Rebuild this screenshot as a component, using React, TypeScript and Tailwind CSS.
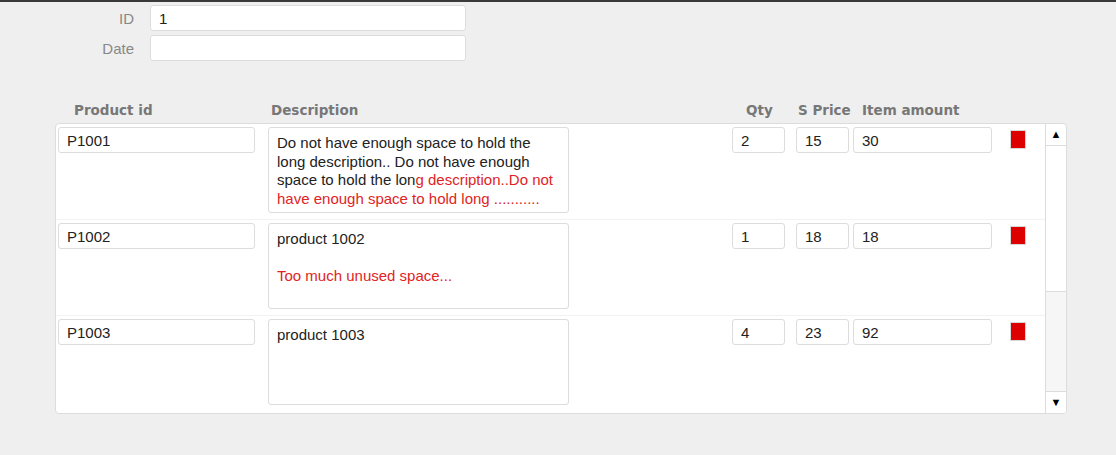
import React from "react";

const sans = { fontFamily: '"Liberation Sans", Arial, sans-serif' };

function Box({ w, children, h = "h-[26px]" }: { w: string; children?: React.ReactNode; h?: string }) {
  return (
    <div className={`${w} ${h} shrink-0 bg-white border border-[#dcdcdc] rounded-[3px] pl-[8px] pt-[3px] flex items-center text-[15px] text-[#222]`}>
      {children}
    </div>
  );
}

function Desc({ children }: { children: React.ReactNode }) {
  return (
    <div className="w-[301px] h-[86px] shrink-0 bg-white border border-[#dcdcdc] rounded-[3px] pl-[8px] pr-[6px] pt-[6px] text-[15px] leading-[18.7px] text-[#222]">
      {children}
    </div>
  );
}

function Row({ id, desc, qty, price, amount, last }: { id: string; desc: React.ReactNode; qty: string; price: string; amount: string; last?: boolean }) {
  return (
    <div className={`h-[96px] flex items-start pt-[3px] pl-[2px] ${last ? "" : "border-b border-[#f2f2f2]"}`}>
      <Box w="w-[197px]">{id}</Box>
      <div className="w-[13px] shrink-0" />
      <Desc>{desc}</Desc>
      <div className="w-[163px] shrink-0" />
      <Box w="w-[53px]">{qty}</Box>
      <div className="w-[11px] shrink-0" />
      <Box w="w-[53px]">{price}</Box>
      <div className="w-[4px] shrink-0" />
      <Box w="w-[139px]">{amount}</Box>
      <div className="w-[18px] shrink-0" />
      <div className="mt-[3px] w-[16px] h-[19px] border border-[#d8d8d8] bg-[#dd0000] shrink-0" />
    </div>
  );
}

export default function App() {
  const red = "text-[#e02424]";
  return (
    <div className="w-[1116px] h-[455px] bg-[#efefef] overflow-hidden" style={sans}>
      <div className="h-[2px] bg-[#3a3a3a]" />
      <div className="pt-[3px] flex flex-col gap-[4px]">
        <div className="flex items-center">
          <div className="w-[134px] pt-[2px] text-right text-[15px] text-[#888]">ID</div>
          <div className="w-[16px]" />
          <Box w="w-[316px]">1</Box>
        </div>
        <div className="flex items-center">
          <div className="w-[134px] pt-[2px] text-right text-[15px] text-[#888]">Date</div>
          <div className="w-[16px]" />
          <Box w="w-[316px]" />
        </div>
      </div>
      <div
        className="mt-[39px] h-[20px] flex items-center text-[13.5px] font-bold text-[#777]"
        style={{ fontFamily: '"DejaVu Sans", Verdana, sans-serif' }}
      >
        <div className="w-[74px] shrink-0" />
        <div className="w-[197px] shrink-0">Product id</div>
        <div className="w-[475px] shrink-0">Description</div>
        <div className="w-[52px] shrink-0">Qty</div>
        <div className="w-[64px] shrink-0">S Price</div>
        <div>Item amount</div>
      </div>
      <div className="ml-[55px] mt-[3px] w-[1012px] h-[291px] bg-white border border-[#dcdcdc] rounded-[4px] flex overflow-hidden">
        <div className="flex-1 flex flex-col">
          <Row
            id="P1001"
            desc={
              <>
                Do not have enough space to hold the long description.. Do not have enough space to hold the lon
                <span className={red}>g description..Do not have enough space to hold long ...........</span>
              </>
            }
            qty="2"
            price="15"
            amount="30"
          />
          <Row
            id="P1002"
            desc={
              <>
                product 1002
                <br />
                <br />
                <span className={red}>Too much unused space...</span>
              </>
            }
            qty="1"
            price="18"
            amount="18"
          />
          <Row id="P1003" desc={<>product 1003</>} qty="4" price="23" amount="92" last />
        </div>
        <div className="w-[21px] shrink-0 border-l border-[#dcdcdc] flex flex-col">
          <div className="h-[22px] border-b border-[#dcdcdc] flex items-center justify-center text-[11px] text-black">▲</div>
          <div className="h-[146px] bg-white border-b border-[#dcdcdc]" />
          <div className="flex-1 bg-[#f6f6f6]" />
          <div className="h-[22px] border-t border-[#dcdcdc] bg-white flex items-center justify-center text-[11px] text-black">▼</div>
        </div>
      </div>
    </div>
  );
}
